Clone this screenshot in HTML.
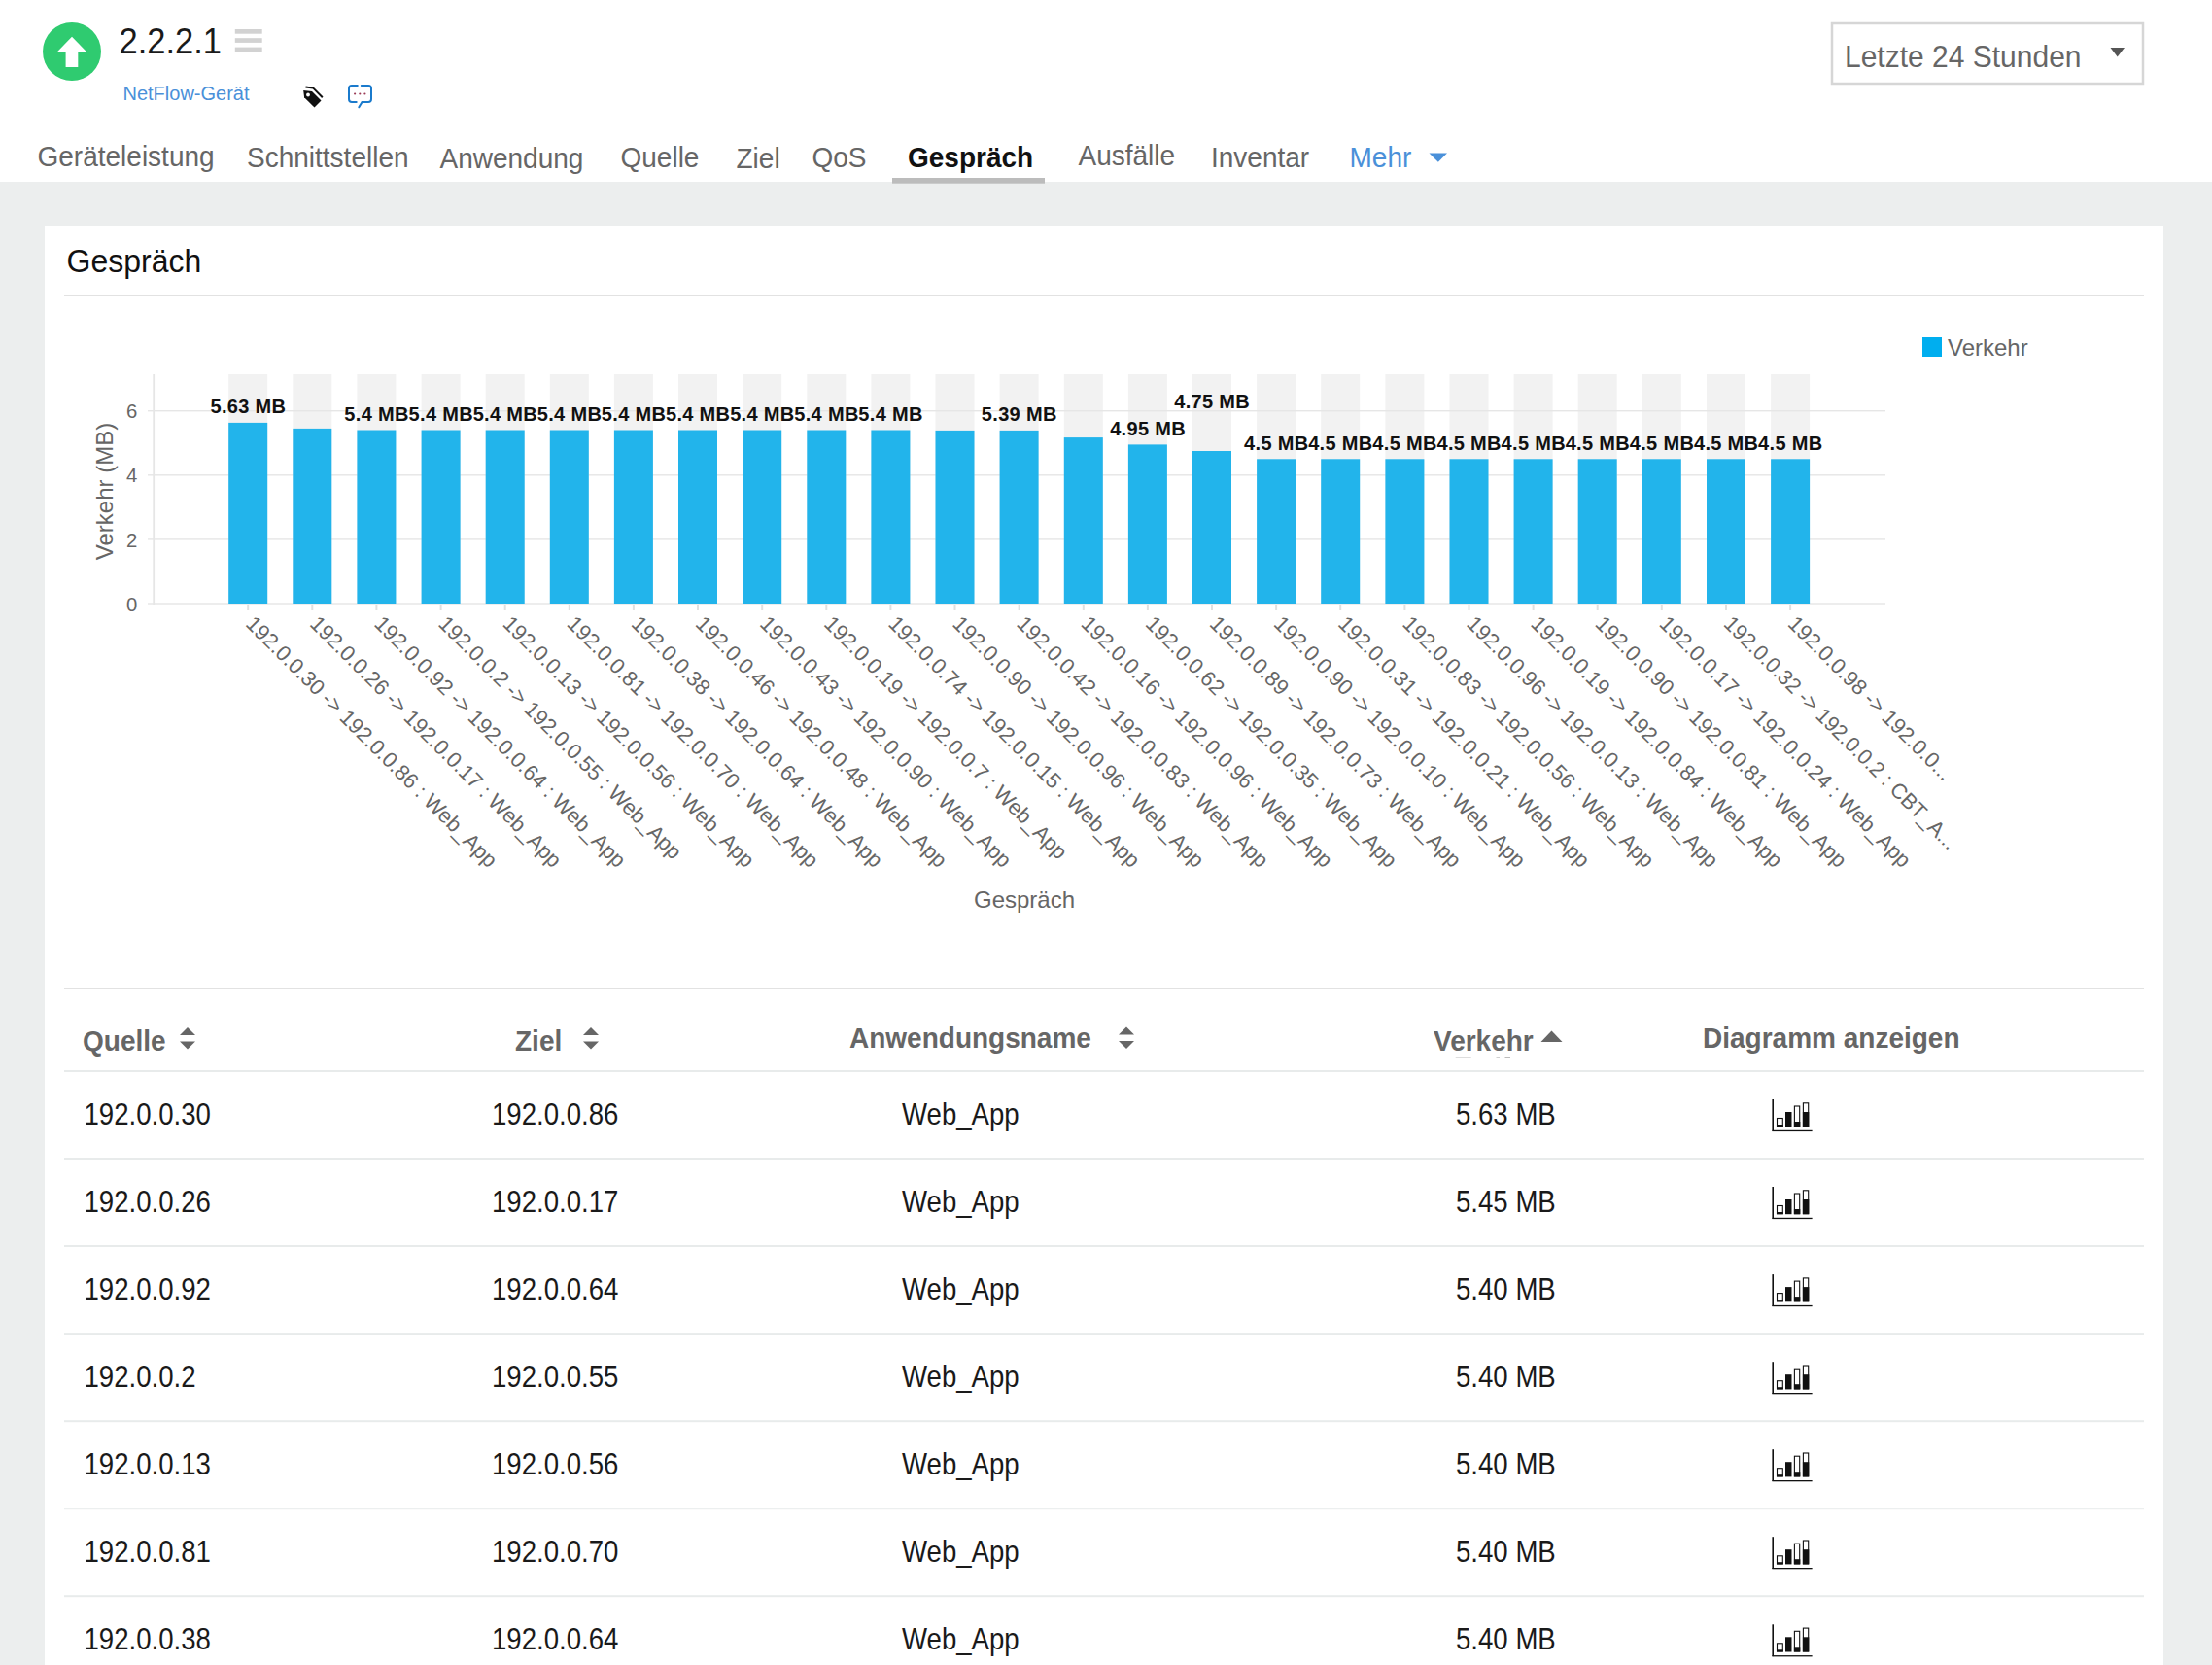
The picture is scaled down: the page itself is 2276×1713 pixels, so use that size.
<!DOCTYPE html><html><head><meta charset="utf-8"><title>Gespräch</title><style>
html,body{margin:0;padding:0;}
body{width:100vw;height:100vh;overflow:hidden;position:relative;background:#fff;font-family:"Liberation Sans", sans-serif;}
svg.page{display:block;position:absolute;left:0;top:0;width:100vw;height:100vh;}
.abs{position:absolute;}
</style></head><body>
<svg class="page" preserveAspectRatio="none" viewBox="0 0 2276 1713" font-family='"Liberation Sans", sans-serif'>
<rect x="0" y="0" width="2276" height="1713" fill="#fff"/>
<rect x="0" y="187" width="2276" height="1526" fill="#eceeee"/>
<rect x="46" y="233" width="2180" height="1480" fill="#fff"/>
<circle cx="74" cy="53" r="30" fill="#2fcb70"/>
<path d="M59.2 52.9 L74 37.8 L88.8 52.9 L80.3 52.9 L80.3 68.9 L67.6 68.9 L67.6 52.9 Z" fill="#fff"/>
<text x="122.5" y="55.2" font-size="37.2" fill="#1a1a1a" textLength="105.5" lengthAdjust="spacingAndGlyphs">2.2.2.1</text>
<rect x="241.8" y="30" width="27.9" height="4.7" fill="#d2d2d2"/><rect x="241.8" y="39.2" width="27.9" height="4.7" fill="#d2d2d2"/><rect x="241.8" y="48.6" width="27.9" height="4.7" fill="#d2d2d2"/>
<text x="126.5" y="103.4" font-size="20" fill="#4a90d9">NetFlow-Gerät</text>
<path d="M312.2 92.9 L321 94 L330.5 103.5 L323.5 110.5 L313.1 100.3 Z" fill="#111"/>
<circle cx="317" cy="97.5" r="1.9" fill="#fff"/>
<path d="M314.5 89.5 L322.3 90.6 L331.8 100.2" fill="none" stroke="#111" stroke-width="2"/>
<path d="M367.8 88 L362 88 Q359 88 359 91 L359 102 Q359 105 362 105 L366.7 105 M371.8 88 L379 88 Q382 88 382 91 L382 102 Q382 105 379 105 L372.5 105 L369.3 110.3" fill="none" stroke="#1a7acc" stroke-width="2" stroke-linecap="round"/>
<circle cx="365.1" cy="96.5" r="1.1" fill="#9a3a55"/><circle cx="370.3" cy="96.5" r="1.1" fill="#9a3a55"/><circle cx="375.4" cy="96.5" r="1.1" fill="#9a3a55"/>
<rect x="1885" y="24" width="320" height="62" fill="#fff" stroke="#d6d6d6" stroke-width="2.5"/>
<text x="1898.00" y="69.00" font-size="30.90" fill="#666" textLength="243.53" lengthAdjust="spacingAndGlyphs">Letzte 24 Stunden</text>
<path d="M2171.5 49 L2186 49 L2178.7 58.5 Z" fill="#555"/>
<text x="38.50" y="171.20" font-size="28.84" fill="#666" textLength="182.11" lengthAdjust="spacingAndGlyphs">Geräteleistung</text>
<text x="254.00" y="172.00" font-size="28.84" fill="#666" textLength="166.54" lengthAdjust="spacingAndGlyphs">Schnittstellen</text>
<text x="452.50" y="173.40" font-size="28.84" fill="#666" textLength="147.91" lengthAdjust="spacingAndGlyphs">Anwendung</text>
<text x="638.50" y="172.00" font-size="28.84" fill="#666" textLength="80.94" lengthAdjust="spacingAndGlyphs">Quelle</text>
<text x="757.50" y="172.90" font-size="28.84" fill="#666" textLength="45.12" lengthAdjust="spacingAndGlyphs">Ziel</text>
<text x="835.50" y="172.00" font-size="28.84" fill="#666" textLength="56.03" lengthAdjust="spacingAndGlyphs">QoS</text>
<text x="934.00" y="172.00" font-size="28.84" font-weight="bold" fill="#111" textLength="129.17" lengthAdjust="spacingAndGlyphs">Gespräch</text>
<text x="1109.50" y="170.00" font-size="28.84" fill="#666" textLength="99.62" lengthAdjust="spacingAndGlyphs">Ausfälle</text>
<text x="1246.00" y="172.00" font-size="28.84" fill="#666" textLength="101.17" lengthAdjust="spacingAndGlyphs">Inventar</text>
<text x="1388.50" y="172.00" font-size="28.84" fill="#4a90d9" textLength="63.80" lengthAdjust="spacingAndGlyphs">Mehr</text>
<path d="M1470.5 157.5 L1489 157.5 L1479.8 166.8 Z" fill="#4a90d9"/>
<rect x="918" y="183" width="157" height="5.7" fill="#bcbcbc"/>
<text x="68.50" y="279.50" font-size="33.28" fill="#111" textLength="138.74" lengthAdjust="spacingAndGlyphs">Gespräch</text>
<rect x="66" y="303" width="2140" height="2" fill="#e2e2e2"/>
<rect x="1978" y="347" width="20" height="20" fill="#00aeef"/>
<text x="2004" y="366" font-size="24" fill="#666">Verkehr</text>
<text x="141.3" y="628.6" font-size="20.3" fill="#666" text-anchor="end">0</text>
<text x="141.3" y="562.5" font-size="20.3" fill="#666" text-anchor="end">2</text>
<text x="141.3" y="496.4" font-size="20.3" fill="#666" text-anchor="end">4</text>
<text x="141.3" y="430.3" font-size="20.3" fill="#666" text-anchor="end">6</text>
<rect x="235.2" y="385" width="40" height="236.0" fill="#f2f2f2"/>
<rect x="301.3" y="385" width="40" height="236.0" fill="#f2f2f2"/>
<rect x="367.4" y="385" width="40" height="236.0" fill="#f2f2f2"/>
<rect x="433.6" y="385" width="40" height="236.0" fill="#f2f2f2"/>
<rect x="499.7" y="385" width="40" height="236.0" fill="#f2f2f2"/>
<rect x="565.8" y="385" width="40" height="236.0" fill="#f2f2f2"/>
<rect x="631.9" y="385" width="40" height="236.0" fill="#f2f2f2"/>
<rect x="698.0" y="385" width="40" height="236.0" fill="#f2f2f2"/>
<rect x="764.2" y="385" width="40" height="236.0" fill="#f2f2f2"/>
<rect x="830.3" y="385" width="40" height="236.0" fill="#f2f2f2"/>
<rect x="896.4" y="385" width="40" height="236.0" fill="#f2f2f2"/>
<rect x="962.5" y="385" width="40" height="236.0" fill="#f2f2f2"/>
<rect x="1028.6" y="385" width="40" height="236.0" fill="#f2f2f2"/>
<rect x="1094.8" y="385" width="40" height="236.0" fill="#f2f2f2"/>
<rect x="1160.9" y="385" width="40" height="236.0" fill="#f2f2f2"/>
<rect x="1227.0" y="385" width="40" height="236.0" fill="#f2f2f2"/>
<rect x="1293.1" y="385" width="40" height="236.0" fill="#f2f2f2"/>
<rect x="1359.2" y="385" width="40" height="236.0" fill="#f2f2f2"/>
<rect x="1425.4" y="385" width="40" height="236.0" fill="#f2f2f2"/>
<rect x="1491.5" y="385" width="40" height="236.0" fill="#f2f2f2"/>
<rect x="1557.6" y="385" width="40" height="236.0" fill="#f2f2f2"/>
<rect x="1623.7" y="385" width="40" height="236.0" fill="#f2f2f2"/>
<rect x="1689.8" y="385" width="40" height="236.0" fill="#f2f2f2"/>
<rect x="1756.0" y="385" width="40" height="236.0" fill="#f2f2f2"/>
<rect x="1822.1" y="385" width="40" height="236.0" fill="#f2f2f2"/>
<rect x="152" y="620.3" width="1788" height="1.4" fill="#e6e6e6"/>
<rect x="152" y="554.2" width="1788" height="1.4" fill="#e6e6e6"/>
<rect x="152" y="488.1" width="1788" height="1.4" fill="#e6e6e6"/>
<rect x="152" y="422.0" width="1788" height="1.4" fill="#e6e6e6"/>
<rect x="157.3" y="385" width="1.8" height="237" fill="#e6e6e6"/>
<text transform="translate(115.5,505.5) rotate(-90)" font-size="24" fill="#666" text-anchor="middle">Verkehr (MB)</text>
<rect x="235.2" y="434.9" width="40" height="186.1" fill="#22b4eb"/>
<rect x="254.2" y="622" width="2" height="6" fill="#e0e0e0"/>
<rect x="301.3" y="440.9" width="40" height="180.1" fill="#22b4eb"/>
<rect x="320.3" y="622" width="2" height="6" fill="#e0e0e0"/>
<rect x="367.4" y="442.5" width="40" height="178.5" fill="#22b4eb"/>
<rect x="386.4" y="622" width="2" height="6" fill="#e0e0e0"/>
<rect x="433.6" y="442.5" width="40" height="178.5" fill="#22b4eb"/>
<rect x="452.6" y="622" width="2" height="6" fill="#e0e0e0"/>
<rect x="499.7" y="442.5" width="40" height="178.5" fill="#22b4eb"/>
<rect x="518.7" y="622" width="2" height="6" fill="#e0e0e0"/>
<rect x="565.8" y="442.5" width="40" height="178.5" fill="#22b4eb"/>
<rect x="584.8" y="622" width="2" height="6" fill="#e0e0e0"/>
<rect x="631.9" y="442.5" width="40" height="178.5" fill="#22b4eb"/>
<rect x="650.9" y="622" width="2" height="6" fill="#e0e0e0"/>
<rect x="698.0" y="442.5" width="40" height="178.5" fill="#22b4eb"/>
<rect x="717.0" y="622" width="2" height="6" fill="#e0e0e0"/>
<rect x="764.2" y="442.5" width="40" height="178.5" fill="#22b4eb"/>
<rect x="783.2" y="622" width="2" height="6" fill="#e0e0e0"/>
<rect x="830.3" y="442.5" width="40" height="178.5" fill="#22b4eb"/>
<rect x="849.3" y="622" width="2" height="6" fill="#e0e0e0"/>
<rect x="896.4" y="442.5" width="40" height="178.5" fill="#22b4eb"/>
<rect x="915.4" y="622" width="2" height="6" fill="#e0e0e0"/>
<rect x="962.5" y="442.9" width="40" height="178.1" fill="#22b4eb"/>
<rect x="981.5" y="622" width="2" height="6" fill="#e0e0e0"/>
<rect x="1028.6" y="442.9" width="40" height="178.1" fill="#22b4eb"/>
<rect x="1047.6" y="622" width="2" height="6" fill="#e0e0e0"/>
<rect x="1094.8" y="450.1" width="40" height="170.9" fill="#22b4eb"/>
<rect x="1113.8" y="622" width="2" height="6" fill="#e0e0e0"/>
<rect x="1160.9" y="457.4" width="40" height="163.6" fill="#22b4eb"/>
<rect x="1179.9" y="622" width="2" height="6" fill="#e0e0e0"/>
<rect x="1227.0" y="464.0" width="40" height="157.0" fill="#22b4eb"/>
<rect x="1246.0" y="622" width="2" height="6" fill="#e0e0e0"/>
<rect x="1293.1" y="472.3" width="40" height="148.7" fill="#22b4eb"/>
<rect x="1312.1" y="622" width="2" height="6" fill="#e0e0e0"/>
<rect x="1359.2" y="472.3" width="40" height="148.7" fill="#22b4eb"/>
<rect x="1378.2" y="622" width="2" height="6" fill="#e0e0e0"/>
<rect x="1425.4" y="472.3" width="40" height="148.7" fill="#22b4eb"/>
<rect x="1444.4" y="622" width="2" height="6" fill="#e0e0e0"/>
<rect x="1491.5" y="472.3" width="40" height="148.7" fill="#22b4eb"/>
<rect x="1510.5" y="622" width="2" height="6" fill="#e0e0e0"/>
<rect x="1557.6" y="472.3" width="40" height="148.7" fill="#22b4eb"/>
<rect x="1576.6" y="622" width="2" height="6" fill="#e0e0e0"/>
<rect x="1623.7" y="472.3" width="40" height="148.7" fill="#22b4eb"/>
<rect x="1642.7" y="622" width="2" height="6" fill="#e0e0e0"/>
<rect x="1689.8" y="472.3" width="40" height="148.7" fill="#22b4eb"/>
<rect x="1708.8" y="622" width="2" height="6" fill="#e0e0e0"/>
<rect x="1756.0" y="472.3" width="40" height="148.7" fill="#22b4eb"/>
<rect x="1775.0" y="622" width="2" height="6" fill="#e0e0e0"/>
<rect x="1822.1" y="472.3" width="40" height="148.7" fill="#22b4eb"/>
<rect x="1841.1" y="622" width="2" height="6" fill="#e0e0e0"/>
<text x="255.2" y="425.1" font-size="20" font-weight="bold" fill="#111" text-anchor="middle" textLength="77.5" lengthAdjust="spacing">5.63 MB</text>
<text x="387.4" y="432.7" font-size="20" font-weight="bold" fill="#111" text-anchor="middle" textLength="66.1" lengthAdjust="spacing">5.4 MB</text>
<text x="453.6" y="432.7" font-size="20" font-weight="bold" fill="#111" text-anchor="middle" textLength="66.1" lengthAdjust="spacing">5.4 MB</text>
<text x="519.7" y="432.7" font-size="20" font-weight="bold" fill="#111" text-anchor="middle" textLength="66.1" lengthAdjust="spacing">5.4 MB</text>
<text x="585.8" y="432.7" font-size="20" font-weight="bold" fill="#111" text-anchor="middle" textLength="66.1" lengthAdjust="spacing">5.4 MB</text>
<text x="651.9" y="432.7" font-size="20" font-weight="bold" fill="#111" text-anchor="middle" textLength="66.1" lengthAdjust="spacing">5.4 MB</text>
<text x="718.0" y="432.7" font-size="20" font-weight="bold" fill="#111" text-anchor="middle" textLength="66.1" lengthAdjust="spacing">5.4 MB</text>
<text x="784.2" y="432.7" font-size="20" font-weight="bold" fill="#111" text-anchor="middle" textLength="66.1" lengthAdjust="spacing">5.4 MB</text>
<text x="850.3" y="432.7" font-size="20" font-weight="bold" fill="#111" text-anchor="middle" textLength="66.1" lengthAdjust="spacing">5.4 MB</text>
<text x="916.4" y="432.7" font-size="20" font-weight="bold" fill="#111" text-anchor="middle" textLength="66.1" lengthAdjust="spacing">5.4 MB</text>
<text x="1048.6" y="433.1" font-size="20" font-weight="bold" fill="#111" text-anchor="middle" textLength="77.5" lengthAdjust="spacing">5.39 MB</text>
<text x="1180.9" y="447.6" font-size="20" font-weight="bold" fill="#111" text-anchor="middle" textLength="77.5" lengthAdjust="spacing">4.95 MB</text>
<text x="1247.0" y="419.6" font-size="20" font-weight="bold" fill="#111" text-anchor="middle" textLength="77.5" lengthAdjust="spacing">4.75 MB</text>
<text x="1313.1" y="462.5" font-size="20" font-weight="bold" fill="#111" text-anchor="middle" textLength="66.1" lengthAdjust="spacing">4.5 MB</text>
<text x="1379.2" y="462.5" font-size="20" font-weight="bold" fill="#111" text-anchor="middle" textLength="66.1" lengthAdjust="spacing">4.5 MB</text>
<text x="1445.4" y="462.5" font-size="20" font-weight="bold" fill="#111" text-anchor="middle" textLength="66.1" lengthAdjust="spacing">4.5 MB</text>
<text x="1511.5" y="462.5" font-size="20" font-weight="bold" fill="#111" text-anchor="middle" textLength="66.1" lengthAdjust="spacing">4.5 MB</text>
<text x="1577.6" y="462.5" font-size="20" font-weight="bold" fill="#111" text-anchor="middle" textLength="66.1" lengthAdjust="spacing">4.5 MB</text>
<text x="1643.7" y="462.5" font-size="20" font-weight="bold" fill="#111" text-anchor="middle" textLength="66.1" lengthAdjust="spacing">4.5 MB</text>
<text x="1709.8" y="462.5" font-size="20" font-weight="bold" fill="#111" text-anchor="middle" textLength="66.1" lengthAdjust="spacing">4.5 MB</text>
<text x="1776.0" y="462.5" font-size="20" font-weight="bold" fill="#111" text-anchor="middle" textLength="66.1" lengthAdjust="spacing">4.5 MB</text>
<text x="1842.1" y="462.5" font-size="20" font-weight="bold" fill="#111" text-anchor="middle" textLength="66.1" lengthAdjust="spacing">4.5 MB</text>
<text transform="translate(251.7,643) rotate(45)" font-size="22" fill="#666">192.0.0.30 -&gt; 192.0.0.86 : Web_App</text>
<text transform="translate(317.8,643) rotate(45)" font-size="22" fill="#666">192.0.0.26 -&gt; 192.0.0.17 : Web_App</text>
<text transform="translate(383.9,643) rotate(45)" font-size="22" fill="#666">192.0.0.92 -&gt; 192.0.0.64 : Web_App</text>
<text transform="translate(450.1,643) rotate(45)" font-size="22" fill="#666">192.0.0.2 -&gt; 192.0.0.55 : Web_App</text>
<text transform="translate(516.2,643) rotate(45)" font-size="22" fill="#666">192.0.0.13 -&gt; 192.0.0.56 : Web_App</text>
<text transform="translate(582.3,643) rotate(45)" font-size="22" fill="#666">192.0.0.81 -&gt; 192.0.0.70 : Web_App</text>
<text transform="translate(648.4,643) rotate(45)" font-size="22" fill="#666">192.0.0.38 -&gt; 192.0.0.64 : Web_App</text>
<text transform="translate(714.5,643) rotate(45)" font-size="22" fill="#666">192.0.0.46 -&gt; 192.0.0.48 : Web_App</text>
<text transform="translate(780.7,643) rotate(45)" font-size="22" fill="#666">192.0.0.43 -&gt; 192.0.0.90 : Web_App</text>
<text transform="translate(846.8,643) rotate(45)" font-size="22" fill="#666">192.0.0.19 -&gt; 192.0.0.7 : Web_App</text>
<text transform="translate(912.9,643) rotate(45)" font-size="22" fill="#666">192.0.0.74 -&gt; 192.0.0.15 : Web_App</text>
<text transform="translate(979.0,643) rotate(45)" font-size="22" fill="#666">192.0.0.90 -&gt; 192.0.0.96 : Web_App</text>
<text transform="translate(1045.1,643) rotate(45)" font-size="22" fill="#666">192.0.0.42 -&gt; 192.0.0.83 : Web_App</text>
<text transform="translate(1111.3,643) rotate(45)" font-size="22" fill="#666">192.0.0.16 -&gt; 192.0.0.96 : Web_App</text>
<text transform="translate(1177.4,643) rotate(45)" font-size="22" fill="#666">192.0.0.62 -&gt; 192.0.0.35 : Web_App</text>
<text transform="translate(1243.5,643) rotate(45)" font-size="22" fill="#666">192.0.0.89 -&gt; 192.0.0.73 : Web_App</text>
<text transform="translate(1309.6,643) rotate(45)" font-size="22" fill="#666">192.0.0.90 -&gt; 192.0.0.10 : Web_App</text>
<text transform="translate(1375.7,643) rotate(45)" font-size="22" fill="#666">192.0.0.31 -&gt; 192.0.0.21 : Web_App</text>
<text transform="translate(1441.9,643) rotate(45)" font-size="22" fill="#666">192.0.0.83 -&gt; 192.0.0.56 : Web_App</text>
<text transform="translate(1508.0,643) rotate(45)" font-size="22" fill="#666">192.0.0.96 -&gt; 192.0.0.13 : Web_App</text>
<text transform="translate(1574.1,643) rotate(45)" font-size="22" fill="#666">192.0.0.19 -&gt; 192.0.0.84 : Web_App</text>
<text transform="translate(1640.2,643) rotate(45)" font-size="22" fill="#666">192.0.0.90 -&gt; 192.0.0.81 : Web_App</text>
<text transform="translate(1706.3,643) rotate(45)" font-size="22" fill="#666">192.0.0.17 -&gt; 192.0.0.24 : Web_App</text>
<text transform="translate(1772.5,643) rotate(45)" font-size="22" fill="#666" textLength="328.7" lengthAdjust="spacingAndGlyphs">192.0.0.32 -&gt; 192.0.0.2 : CBT_A...</text>
<text transform="translate(1838.6,643) rotate(45)" font-size="22" fill="#666">192.0.0.98 -&gt; 192.0.0...</text>
<text x="1054" y="934" font-size="24" fill="#666" text-anchor="middle">Gespräch</text>
<rect x="66" y="1016" width="2140" height="2" fill="#e2e2e2"/>
<text x="85.00" y="1080.80" font-size="28.84" font-weight="bold" fill="#666" textLength="85.59" lengthAdjust="spacingAndGlyphs">Quelle</text>
<text x="530.00" y="1080.80" font-size="28.84" font-weight="bold" fill="#666" textLength="48.23" lengthAdjust="spacingAndGlyphs">Ziel</text>
<text x="874.00" y="1078.00" font-size="28.84" font-weight="bold" fill="#666" textLength="248.92" lengthAdjust="spacingAndGlyphs">Anwendungsname</text>
<text x="1475.00" y="1081.00" font-size="28.84" font-weight="bold" fill="#666" textLength="102.75" lengthAdjust="spacingAndGlyphs">Verkehr</text>
<text x="1752.00" y="1078.30" font-size="28.84" font-weight="bold" fill="#666" textLength="264.53" lengthAdjust="spacingAndGlyphs">Diagramm anzeigen</text>
<path d="M185.0 1065.0 L193.0 1057.0 L201.0 1065.0 Z M185.0 1071.5 L201.0 1071.5 L193.0 1079.5 Z" fill="#666"/>
<path d="M600.0 1065.0 L608.0 1057.0 L616.0 1065.0 Z M600.0 1071.5 L616.0 1071.5 L608.0 1079.5 Z" fill="#666"/>
<path d="M1151.0 1064.5 L1159.0 1056.5 L1167.0 1064.5 Z M1151.0 1071.0 L1167.0 1071.0 L1159.0 1079.0 Z" fill="#666"/>
<path d="M1585.5 1072 L1596.5 1060.5 L1607.5 1072 Z" fill="#666"/>
<rect x="66" y="1101" width="2140" height="2" fill="#e8ebeb"/>
<rect x="1497.7" y="1087" width="16" height="1" fill="#dddddd"/><rect x="1539.5" y="1087" width="3.5" height="1" fill="#cfcfcf"/><rect x="1548.5" y="1087" width="5.5" height="1" fill="#bbbbbb"/>
<text x="86.50" y="1157.00" font-size="30.91" fill="#1a1a1a" textLength="130.46" lengthAdjust="spacingAndGlyphs">192.0.0.30</text>
<text x="506.00" y="1157.00" font-size="30.91" fill="#1a1a1a" textLength="130.46" lengthAdjust="spacingAndGlyphs">192.0.0.86</text>
<text x="928.00" y="1157.00" font-size="30.91" fill="#1a1a1a" textLength="120.71" lengthAdjust="spacingAndGlyphs">Web_App</text>
<text x="1498.00" y="1157.00" font-size="30.91" fill="#1a1a1a" textLength="102.79" lengthAdjust="spacingAndGlyphs">5.63 MB</text>
<rect x="1823.4" y="1131.0" width="1.6" height="32.8" fill="#111"/><rect x="1823.4" y="1162.8" width="41.2" height="1.3" fill="#111"/><rect x="1828.5" y="1150.5" width="5.8" height="8.2" fill="none" stroke="#111" stroke-width="1.1"/><rect x="1828.0" y="1157.0" width="6.8" height="2.2" fill="#111"/><rect x="1837.0" y="1144.0" width="6.5" height="15.2" fill="#111"/><rect x="1846.4" y="1138.0" width="5.3" height="20.7" fill="none" stroke="#111" stroke-width="1.1"/><rect x="1845.9" y="1154.0" width="6.4" height="5.2" fill="#111"/><rect x="1855.4" y="1134.8" width="5.3" height="23.9" fill="none" stroke="#111" stroke-width="1.1"/><rect x="1854.9" y="1144.0" width="6.4" height="15.2" fill="#111"/>
<rect x="66" y="1191.0" width="2140" height="2" fill="#e8ebeb"/>
<text x="86.50" y="1247.05" font-size="30.91" fill="#1a1a1a" textLength="130.46" lengthAdjust="spacingAndGlyphs">192.0.0.26</text>
<text x="506.00" y="1247.05" font-size="30.91" fill="#1a1a1a" textLength="130.46" lengthAdjust="spacingAndGlyphs">192.0.0.17</text>
<text x="928.00" y="1247.05" font-size="30.91" fill="#1a1a1a" textLength="120.71" lengthAdjust="spacingAndGlyphs">Web_App</text>
<text x="1498.00" y="1247.05" font-size="30.91" fill="#1a1a1a" textLength="102.79" lengthAdjust="spacingAndGlyphs">5.45 MB</text>
<rect x="1823.4" y="1221.0" width="1.6" height="32.8" fill="#111"/><rect x="1823.4" y="1252.8" width="41.2" height="1.3" fill="#111"/><rect x="1828.5" y="1240.5" width="5.8" height="8.2" fill="none" stroke="#111" stroke-width="1.1"/><rect x="1828.0" y="1247.0" width="6.8" height="2.2" fill="#111"/><rect x="1837.0" y="1234.0" width="6.5" height="15.2" fill="#111"/><rect x="1846.4" y="1228.0" width="5.3" height="20.7" fill="none" stroke="#111" stroke-width="1.1"/><rect x="1845.9" y="1244.0" width="6.4" height="5.2" fill="#111"/><rect x="1855.4" y="1224.8" width="5.3" height="23.9" fill="none" stroke="#111" stroke-width="1.1"/><rect x="1854.9" y="1234.0" width="6.4" height="15.2" fill="#111"/>
<rect x="66" y="1281.0" width="2140" height="2" fill="#e8ebeb"/>
<text x="86.50" y="1337.10" font-size="30.91" fill="#1a1a1a" textLength="130.46" lengthAdjust="spacingAndGlyphs">192.0.0.92</text>
<text x="506.00" y="1337.10" font-size="30.91" fill="#1a1a1a" textLength="130.46" lengthAdjust="spacingAndGlyphs">192.0.0.64</text>
<text x="928.00" y="1337.10" font-size="30.91" fill="#1a1a1a" textLength="120.71" lengthAdjust="spacingAndGlyphs">Web_App</text>
<text x="1498.00" y="1337.10" font-size="30.91" fill="#1a1a1a" textLength="102.79" lengthAdjust="spacingAndGlyphs">5.40 MB</text>
<rect x="1823.4" y="1311.1" width="1.6" height="32.8" fill="#111"/><rect x="1823.4" y="1342.9" width="41.2" height="1.3" fill="#111"/><rect x="1828.5" y="1330.6" width="5.8" height="8.2" fill="none" stroke="#111" stroke-width="1.1"/><rect x="1828.0" y="1337.1" width="6.8" height="2.2" fill="#111"/><rect x="1837.0" y="1324.1" width="6.5" height="15.2" fill="#111"/><rect x="1846.4" y="1318.1" width="5.3" height="20.7" fill="none" stroke="#111" stroke-width="1.1"/><rect x="1845.9" y="1334.1" width="6.4" height="5.2" fill="#111"/><rect x="1855.4" y="1314.9" width="5.3" height="23.9" fill="none" stroke="#111" stroke-width="1.1"/><rect x="1854.9" y="1324.1" width="6.4" height="15.2" fill="#111"/>
<rect x="66" y="1371.1" width="2140" height="2" fill="#e8ebeb"/>
<text x="86.50" y="1427.15" font-size="30.91" fill="#1a1a1a" textLength="115.10" lengthAdjust="spacingAndGlyphs">192.0.0.2</text>
<text x="506.00" y="1427.15" font-size="30.91" fill="#1a1a1a" textLength="130.46" lengthAdjust="spacingAndGlyphs">192.0.0.55</text>
<text x="928.00" y="1427.15" font-size="30.91" fill="#1a1a1a" textLength="120.71" lengthAdjust="spacingAndGlyphs">Web_App</text>
<text x="1498.00" y="1427.15" font-size="30.91" fill="#1a1a1a" textLength="102.79" lengthAdjust="spacingAndGlyphs">5.40 MB</text>
<rect x="1823.4" y="1401.2" width="1.6" height="32.8" fill="#111"/><rect x="1823.4" y="1433.0" width="41.2" height="1.3" fill="#111"/><rect x="1828.5" y="1420.7" width="5.8" height="8.2" fill="none" stroke="#111" stroke-width="1.1"/><rect x="1828.0" y="1427.2" width="6.8" height="2.2" fill="#111"/><rect x="1837.0" y="1414.2" width="6.5" height="15.2" fill="#111"/><rect x="1846.4" y="1408.2" width="5.3" height="20.7" fill="none" stroke="#111" stroke-width="1.1"/><rect x="1845.9" y="1424.2" width="6.4" height="5.2" fill="#111"/><rect x="1855.4" y="1405.0" width="5.3" height="23.9" fill="none" stroke="#111" stroke-width="1.1"/><rect x="1854.9" y="1414.2" width="6.4" height="15.2" fill="#111"/>
<rect x="66" y="1461.2" width="2140" height="2" fill="#e8ebeb"/>
<text x="86.50" y="1517.20" font-size="30.91" fill="#1a1a1a" textLength="130.46" lengthAdjust="spacingAndGlyphs">192.0.0.13</text>
<text x="506.00" y="1517.20" font-size="30.91" fill="#1a1a1a" textLength="130.46" lengthAdjust="spacingAndGlyphs">192.0.0.56</text>
<text x="928.00" y="1517.20" font-size="30.91" fill="#1a1a1a" textLength="120.71" lengthAdjust="spacingAndGlyphs">Web_App</text>
<text x="1498.00" y="1517.20" font-size="30.91" fill="#1a1a1a" textLength="102.79" lengthAdjust="spacingAndGlyphs">5.40 MB</text>
<rect x="1823.4" y="1491.2" width="1.6" height="32.8" fill="#111"/><rect x="1823.4" y="1523.0" width="41.2" height="1.3" fill="#111"/><rect x="1828.5" y="1510.7" width="5.8" height="8.2" fill="none" stroke="#111" stroke-width="1.1"/><rect x="1828.0" y="1517.2" width="6.8" height="2.2" fill="#111"/><rect x="1837.0" y="1504.2" width="6.5" height="15.2" fill="#111"/><rect x="1846.4" y="1498.2" width="5.3" height="20.7" fill="none" stroke="#111" stroke-width="1.1"/><rect x="1845.9" y="1514.2" width="6.4" height="5.2" fill="#111"/><rect x="1855.4" y="1495.0" width="5.3" height="23.9" fill="none" stroke="#111" stroke-width="1.1"/><rect x="1854.9" y="1504.2" width="6.4" height="15.2" fill="#111"/>
<rect x="66" y="1551.2" width="2140" height="2" fill="#e8ebeb"/>
<text x="86.50" y="1607.25" font-size="30.91" fill="#1a1a1a" textLength="130.46" lengthAdjust="spacingAndGlyphs">192.0.0.81</text>
<text x="506.00" y="1607.25" font-size="30.91" fill="#1a1a1a" textLength="130.46" lengthAdjust="spacingAndGlyphs">192.0.0.70</text>
<text x="928.00" y="1607.25" font-size="30.91" fill="#1a1a1a" textLength="120.71" lengthAdjust="spacingAndGlyphs">Web_App</text>
<text x="1498.00" y="1607.25" font-size="30.91" fill="#1a1a1a" textLength="102.79" lengthAdjust="spacingAndGlyphs">5.40 MB</text>
<rect x="1823.4" y="1581.2" width="1.6" height="32.8" fill="#111"/><rect x="1823.4" y="1613.0" width="41.2" height="1.3" fill="#111"/><rect x="1828.5" y="1600.8" width="5.8" height="8.2" fill="none" stroke="#111" stroke-width="1.1"/><rect x="1828.0" y="1607.2" width="6.8" height="2.2" fill="#111"/><rect x="1837.0" y="1594.2" width="6.5" height="15.2" fill="#111"/><rect x="1846.4" y="1588.2" width="5.3" height="20.7" fill="none" stroke="#111" stroke-width="1.1"/><rect x="1845.9" y="1604.2" width="6.4" height="5.2" fill="#111"/><rect x="1855.4" y="1585.0" width="5.3" height="23.9" fill="none" stroke="#111" stroke-width="1.1"/><rect x="1854.9" y="1594.2" width="6.4" height="15.2" fill="#111"/>
<rect x="66" y="1641.2" width="2140" height="2" fill="#e8ebeb"/>
<text x="86.50" y="1697.30" font-size="30.91" fill="#1a1a1a" textLength="130.46" lengthAdjust="spacingAndGlyphs">192.0.0.38</text>
<text x="506.00" y="1697.30" font-size="30.91" fill="#1a1a1a" textLength="130.46" lengthAdjust="spacingAndGlyphs">192.0.0.64</text>
<text x="928.00" y="1697.30" font-size="30.91" fill="#1a1a1a" textLength="120.71" lengthAdjust="spacingAndGlyphs">Web_App</text>
<text x="1498.00" y="1697.30" font-size="30.91" fill="#1a1a1a" textLength="102.79" lengthAdjust="spacingAndGlyphs">5.40 MB</text>
<rect x="1823.4" y="1671.3" width="1.6" height="32.8" fill="#111"/><rect x="1823.4" y="1703.1" width="41.2" height="1.3" fill="#111"/><rect x="1828.5" y="1690.8" width="5.8" height="8.2" fill="none" stroke="#111" stroke-width="1.1"/><rect x="1828.0" y="1697.3" width="6.8" height="2.2" fill="#111"/><rect x="1837.0" y="1684.3" width="6.5" height="15.2" fill="#111"/><rect x="1846.4" y="1678.3" width="5.3" height="20.7" fill="none" stroke="#111" stroke-width="1.1"/><rect x="1845.9" y="1694.3" width="6.4" height="5.2" fill="#111"/><rect x="1855.4" y="1675.1" width="5.3" height="23.9" fill="none" stroke="#111" stroke-width="1.1"/><rect x="1854.9" y="1684.3" width="6.4" height="15.2" fill="#111"/>
<rect x="66" y="1731.3" width="2140" height="2" fill="#e8ebeb"/>
</svg>
</body></html>
